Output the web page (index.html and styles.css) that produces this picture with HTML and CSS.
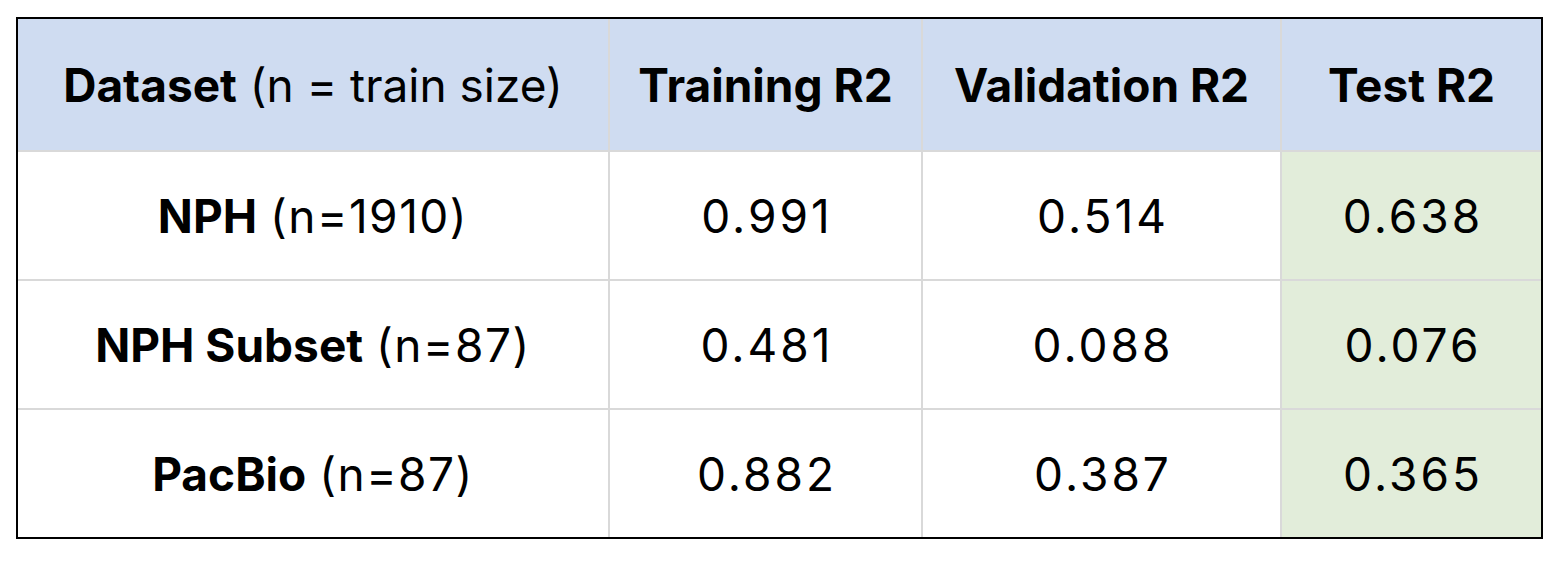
FILE: index.html
```html
<!DOCTYPE html>
<html>
<head>
<meta charset="utf-8">
<link rel="stylesheet" href="styles.css">
</head>
<body>
<table class="results">
  <colgroup>
    <col class="c1"><col class="c2"><col class="c3"><col class="c4">
  </colgroup>
  <thead>
    <tr>
      <th><b>Dataset</b> (n = train size)</th>
      <th><b>Training R2</b></th>
      <th><b>Validation R2</b></th>
      <th><b>Test R2</b></th>
    </tr>
  </thead>
  <tbody>
    <tr>
      <td><b>NPH</b> <span class="n">(n=1910)</span></td>
      <td class="num">0.991</td>
      <td class="num">0.514</td>
      <td class="num test">0.638</td>
    </tr>
    <tr>
      <td><b>NPH Subset</b> <span class="n">(n=87)</span></td>
      <td class="num">0.481</td>
      <td class="num">0.088</td>
      <td class="num test">0.076</td>
    </tr>
    <tr>
      <td><b>PacBio</b> <span class="n">(n=87)</span></td>
      <td class="num">0.882</td>
      <td class="num">0.387</td>
      <td class="num test">0.365</td>
    </tr>
  </tbody>
</table>
</body>
</html>
```
FILE: styles.css
```css
html, body {
  margin: 0;
  background: #ffffff;
}
body {
  padding: 17px 0 0 16px;
  font-family: "Inter", "Noto Sans", sans-serif;
  color: #000;
}
.results {
  border-collapse: separate;
  border-spacing: 0;
  border: 2px solid #000;
  width: 1527px;
  table-layout: fixed;
}
.c1 { width: 592px; }
.c2 { width: 313px; }
.c3 { width: 359px; }
.c4 { width: 259px; }
.results th, .results td {
  text-align: center;
  vertical-align: middle;
  font-size: 46px;
  font-weight: 400;
  padding: 0;
  border-right: 2px solid #d9d9d9;
  border-bottom: 2px solid #d9d9d9;
}
.results th:last-child, .results td:last-child { border-right: none; }
.results tbody tr:last-child td { border-bottom: none; }
.results b { font-weight: 700; }
.results th {
  background: #cfdcf1;
  height: 131px;
}
.results td { height: 127px; }
.results td.num {
  letter-spacing: 3px;
  text-indent: 3px;
}
.results .n { letter-spacing: 1.5px; }
.results td.test { background: #e2edda; }
```
